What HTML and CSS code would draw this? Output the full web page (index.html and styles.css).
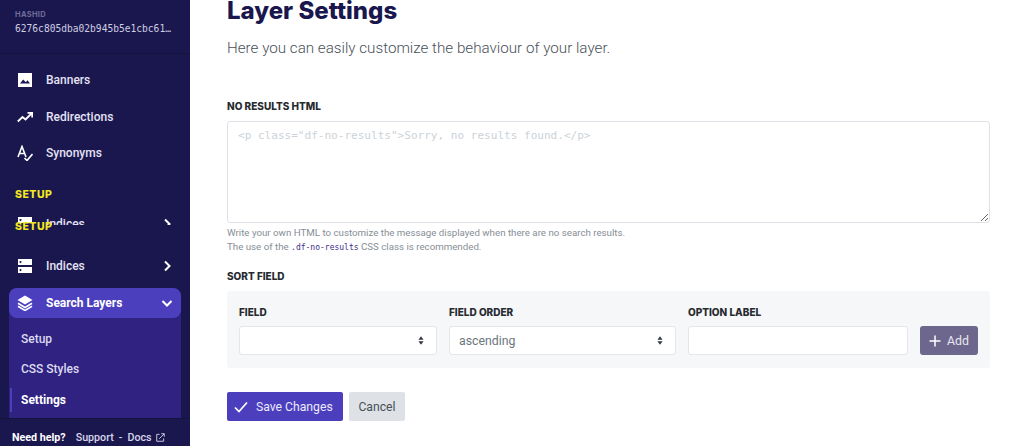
FILE: index.html
```html
<!DOCTYPE html>
<html lang="en">
<head>
<meta charset="utf-8">
<title>Layer Settings</title>
<link rel="stylesheet" href="styles.css">
</head>
<body>
<div class="app">
  <aside class="sidebar">
    <div class="hash">
      <div class="hash-label">HASHID</div>
      <div class="hash-value">6276c805dba02b945b5e1cbc61…</div>
    </div>
    <nav class="nav">
      <a class="item">
        <svg class="ico" viewBox="0 0 16 16"><path fill="#fff" fill-rule="evenodd" d="M1 1h14v14H1zM3 11.500h10L10.500 8.300 8.800 10.300 6.200 7.500z"/></svg>
        <span>Banners</span>
      </a>
      <a class="item">
        <svg class="ico" viewBox="0 0 16 16"><path fill="none" stroke="#fff" stroke-width="1.800" d="M0.800 12.500 5.500 8l3 2.500L14.500 4.500M10.500 3.800h4.700v4.700"/></svg>
        <span>Redirections</span>
      </a>
      <a class="item">
        <svg class="ico" viewBox="0 0 16 16"><path fill="none" stroke="#fff" stroke-width="1.600" d="M1 12 5 1.500 9 12M2.500 8.500h5M7.500 13l2.500 2.500L15.500 9"/></svg>
        <span>Synonyms</span>
      </a>
      <div class="section first">SETUP</div>
      <div class="clipped">
        <a class="item">
          <svg class="ico" viewBox="0 0 16 16"><path fill="#fff" fill-rule="evenodd" d="M1 1h14v6H1zM1 9h14v6H1zM3.500 3a1 1 0 1 0 .01 0zM3.500 11a1 1 0 1 0 .01 0z"/></svg>
          <span>Indices</span>
          <svg class="chev" viewBox="0 0 12 12"><path fill="none" stroke="#fff" stroke-width="2" d="M4 1.500 8.500 6 4 10.500"/></svg>
        </a>
      </div>
      <div class="section second">SETUP</div>
      <a class="item">
        <svg class="ico" viewBox="0 0 16 16"><path fill="#fff" fill-rule="evenodd" d="M1 1h14v6H1zM1 9h14v6H1zM3.500 3a1 1 0 1 0 .01 0zM3.500 11a1 1 0 1 0 .01 0z"/></svg>
        <span>Indices</span>
        <svg class="chev" viewBox="0 0 12 12"><path fill="none" stroke="#fff" stroke-width="2" d="M4 1.500 8.500 6 4 10.500"/></svg>
      </a>
      <div class="group">
        <a class="item active">
          <svg class="ico" viewBox="0 0 16 16"><path fill="#fff" d="M8 .5 15.500 5 8 9.500.5 5z"/><path fill="none" stroke="#fff" stroke-width="1.600" d="M1 8.300 8 12.500l7-4.200M1 11.300 8 15.500l7-4.200"/></svg>
          <span>Search Layers</span>
          <svg class="chev" viewBox="0 0 12 12"><path fill="none" stroke="#fff" stroke-width="2" d="M1.500 4 6 8.500 10.500 4"/></svg>
        </a>
        <a class="sub">Setup</a>
        <a class="sub">CSS Styles</a>
        <a class="sub current">Settings</a>
      </div>
    </nav>
    <div class="help">
      <strong>Need help?</strong>
      <span class="help-link">Support</span>
      <span class="help-dash">-</span>
      <span>Docs</span>
      <svg class="ext" viewBox="0 0 10 10"><path fill="none" stroke="#d8d6ea" stroke-width="1" d="M4 1.500H.8v7.700h7.700V6M3.500 6.500 9 1M5.800.8h3.400v3.400"/></svg>
    </div>
  </aside>
  <main class="main">
    <h1 class="title">Layer Settings</h1>
    <p class="lead">Here you can easily customize the behaviour of your layer.</p>
    <label class="label html-label" for="html">NO RESULTS HTML</label>
    <textarea class="area" id="html" placeholder='&lt;p class="df-no-results"&gt;Sorry, no results found.&lt;/p&gt;'></textarea>
    <p class="hint">Write your own HTML to customize the message displayed when there are no search results.<br>The use of the <code>.df-no-results</code> CSS class is recommended.</p>
    <div class="label sort-label">SORT FIELD</div>
    <div class="panel">
      <div class="col col-field">
        <div class="label">FIELD</div>
        <div class="select"><span></span><svg class="updown" viewBox="0 0 7 10"><path fill="#343a40" d="M3.500 0 6.500 4H.5zM3.500 10 .5 6h6z"/></svg></div>
      </div>
      <div class="col col-order">
        <div class="label">FIELD ORDER</div>
        <div class="select"><span>ascending</span><svg class="updown" viewBox="0 0 7 10"><path fill="#343a40" d="M3.500 0 6.500 4H.5zM3.500 10 .5 6h6z"/></svg></div>
      </div>
      <div class="col col-option">
        <div class="label">OPTION LABEL</div>
        <div class="input"></div>
      </div>
      <div class="add">
        <svg class="plus" viewBox="0 0 12 12"><path fill="none" stroke="#fff" stroke-width="1.500" d="M6 .5v11M.5 6h11"/></svg>
        <span>Add</span>
      </div>
    </div>
    <div class="actions">
      <div class="btn save">
        <svg class="check" viewBox="0 0 14 12"><path fill="none" stroke="#fff" stroke-width="1.700" d="M1 6.500 5 10.500 13 1.500"/></svg>
        <span>Save Changes</span>
      </div>
      <div class="btn cancel">Cancel</div>
    </div>
  </main>
</div>
</body>
</html>
```
FILE: styles.css
```css
* { box-sizing: border-box; }
html, body { margin: 0; padding: 0; height: 446px; overflow: hidden; background: #fff; }
body { font-family: Roboto, "Liberation Sans", sans-serif; color: #343a40; }
.app { display: flex; width: 1024px; height: 446px; overflow: hidden; }

.sidebar { width: 190px; flex: none; height: 446px; background: #1a174f; color: #e4e2f3; display: flex; flex-direction: column; }
.hash { height: 54px; padding: 10px 0 0 15px; border-bottom: 1px solid #15123f; }
.hash-label { font-family: Inter, sans-serif; font-size: 7.500px; font-weight: 700; line-height: 9px; color: #6f6d99; letter-spacing: .3px; }
.hash-value { font-family: "DejaVu Sans Mono", monospace; font-size: 9.600px; line-height: 12px; margin-top: 4px; color: #cfcee0; white-space: nowrap; }
.nav { flex: 1; padding-top: 8px; min-height: 0; }
.item { display: flex; align-items: center; height: 36.500px; padding: 0 17px; font-size: 12px; font-weight: 500; color: #e4e2f3; }
.ico { width: 16px; height: 16px; flex: none; margin-right: 13px; }
.chev { width: 12px; height: 12px; margin-left: auto; }
.section { font-family: Inter, sans-serif; font-weight: 800; font-size: 10.500px; line-height: 14px; color: #f5e71d; padding-left: 15px; letter-spacing: .5px; }
.section.first { margin-top: 16.500px; }
.clipped { height: 21px; margin-top: 2px; overflow: hidden; }
.clipped .item { height: 23px; margin-top: 8px; }
.section.second { margin-top: -5px; position: relative; margin-bottom: 14px; }
.group { margin: 3px 9px 0; height: 130.500px; background: #2f2280; border-radius: 8px 8px 0 0; }
.item.active { height: 30px; background: #4b3fbe; border-radius: 8px; padding: 0 8px; color: #fff; font-weight: 700; }
.item.active + .sub { margin-top: 6px; }
.sub { display: block; height: 30.500px; line-height: 30.500px; padding-left: 12px; font-size: 12px; font-weight: 500; color: #dcdaf0; position: relative; }
.sub.current { color: #fff; font-weight: 700; }
.sub.current::before { content: ""; position: absolute; left: 1px; top: 3px; bottom: 3px; width: 2px; background: #4b3fbe; }
.help { height: 28px; flex: none; background: #1a174f; border-top: 1px solid #15123f; display: flex; align-items: center; padding: 9px 0 0 12px; font-size: 10.700px; color: #d8d6ea; font-weight: 500; }
.help strong { color: #fff; font-weight: 700; margin-right: 10px; }
.help-dash { margin: 0 5px; }
.ext { width: 9px; height: 9px; margin-left: 4px; }

.main { flex: 1; padding: 0 34px 0 37px; min-width: 0; }
.title { font-family: Inter, sans-serif; font-weight: 800; font-size: 24px; line-height: 22px; color: #1a174f; margin: 0; }
.lead { font-size: 15.200px; font-weight: 300; line-height: 20px; color: #495057; margin: 16px 0 0; }
.label { font-family: Inter, sans-serif; font-weight: 800; font-size: 10px; line-height: 12px; color: #272b30; display: block; }
.html-label { margin-top: 42px; }
.area { display: block; width: 763px; height: 102px; margin-top: 9px; border: 1px solid #dee2e6; border-radius: 3px; padding: 6px 10px; font-family: "DejaVu Sans Mono", monospace; font-size: 11.050px; line-height: 16px; background: #fff; }
.area::placeholder { color: #ccd2d8; opacity: 1; }
.hint { font-size: 9.720px; line-height: 14px; color: #868e96; margin: 3px 0 0; }
.hint code { font-family: "DejaVu Sans Mono", monospace; font-size: 8px; line-height: 0; color: #3a2d8a; }
.sort-label { margin-top: 16px; }
.panel { width: 763px; height: 77px; margin-top: 9px; background: #f6f7f9; border-radius: 3px; padding: 0 12px 13px; display: flex; align-items: flex-end; }
.col .label { margin-bottom: 8px; }
.col-field { width: 198px; margin-right: 12px; }
.col-order { width: 227px; margin-right: 12px; }
.col-option { width: 220px; margin-right: 12px; }
.select, .input { height: 29px; background: #fff; border: 1px solid #e3e6ea; border-radius: 3px; display: flex; align-items: center; justify-content: space-between; padding: 0 12px 0 9px; font-size: 12.300px; color: #6c757d; }
.updown { width: 6px; height: 9px; }
.add { width: 58px; height: 29px; background: #6d678e; border-radius: 3px; color: #e8e7ef; display: flex; align-items: center; justify-content: center; font-size: 12.300px; }
.plus { width: 12px; height: 12px; margin-right: 6px; }
.actions { display: flex; gap: 6px; margin-top: 24px; }
.btn { height: 29px; border-radius: 2px; display: flex; align-items: center; font-size: 12.200px; }
.save { width: 116px; background: #4b3fbe; color: #ece9fb; padding-left: 7px; }
.check { width: 14px; height: 12px; margin-right: 8px; }
.cancel { width: 56px; background: #dee2e6; color: #495057; justify-content: center; }
```
